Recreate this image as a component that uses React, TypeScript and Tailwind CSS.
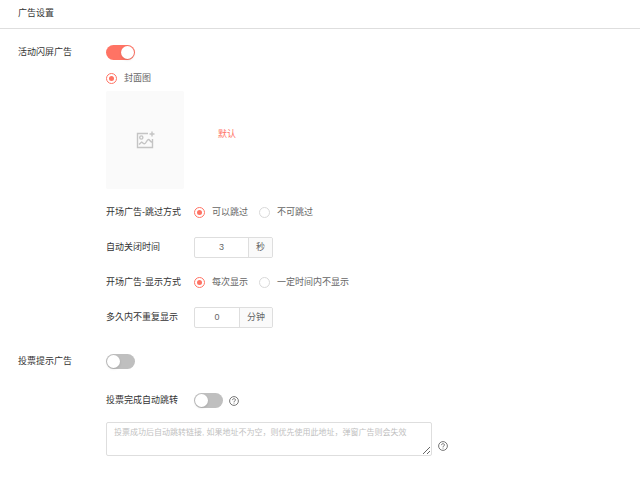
import { useState, type ReactNode } from "react";

function Switch({ id, initial = false }: { id: string; initial?: boolean }) {
  const [on, setOn] = useState(initial);
  return (
    <input
      id={id}
      type="checkbox"
      role="switch"
      checked={on}
      onChange={() => setOn(!on)}
      className="flex h-[15px] w-[29px] shrink-0 cursor-pointer appearance-none items-center rounded-full bg-[#bfbfbf] px-px before:size-[13px] before:rounded-full before:bg-white before:shadow-sm checked:justify-end checked:bg-[#ff7364]"
    />
  );
}

function Radio({ name, label, initial = false }: { name: string; label: string; initial?: boolean }) {
  return (
    <label className="flex cursor-pointer items-center gap-[7px] text-[#666]">
      <input
        type="radio"
        name={name}
        defaultChecked={initial}
        className="flex size-[11px] shrink-0 cursor-pointer appearance-none items-center justify-center rounded-full border border-[#d9d9d9] before:size-[5px] before:rounded-full checked:border-[#ff7364] checked:before:bg-[#ff7364]"
      />
      {label}
    </label>
  );
}

function NumberField({ id, value, unit }: { id: string; value: string; unit: string }) {
  return (
    <div className="flex h-[21px] w-[79px] overflow-hidden rounded-xs border border-[#dedede] text-[#666]">
      <input id={id} defaultValue={value} className="min-w-0 flex-1 text-center outline-none" />
      <span className="flex items-center border-l border-[#dedede] bg-[#fafafa] px-[7px]">{unit}</span>
    </div>
  );
}

function SubRow({ label, htmlFor, children }: { label: string; htmlFor?: string; children: ReactNode }) {
  return (
    <div className="flex h-[21px] items-center">
      {htmlFor ? (
        <label htmlFor={htmlFor} className="w-[88px] shrink-0">
          {label}
        </label>
      ) : (
        <span className="w-[88px] shrink-0">{label}</span>
      )}
      {children}
    </div>
  );
}

function Help() {
  return (
    <svg viewBox="0 0 20 20" className="size-[10px] shrink-0" fill="none" stroke="#666" strokeWidth="1.8" role="img" aria-label="帮助">
      <circle cx="10" cy="10" r="8.8" />
      <path d="M7 8.200C7 6.400 8.300 5.400 10 5.400s3 1 3 2.600c0 1.800-3 1.900-3 4" />
      <path d="M10 13.300v1.800" />
    </svg>
  );
}

function ImagePlus() {
  return (
    <svg viewBox="0 0 19 18" className="h-[18px] w-[19px]" fill="none" stroke="#c4c4c4" strokeWidth="1.4" aria-hidden="true">
      <path d="M12 2.500H1.500v14h15V8" />
      <circle cx="5.300" cy="6.500" r="1.600" />
      <path d="M3 13.500l2.700-2.400c1 .2 1.500 1.700 2.800 1.700 1.800 0 2-4.300 4-4.300 1.300 0 1.500 2.500 4 2.800" />
      <path d="M16 .5v5M13.500 3h5" />
    </svg>
  );
}

export default function App() {
  return (
    <main className="min-h-screen bg-white font-['Liberation_Sans','Noto_Sans_CJK_SC',sans-serif] text-[9px] leading-[15px] text-[#333]">
      <header className="flex h-[29px] items-center border-b border-[#dedede] px-[18px] pb-0.5">
        <h1>广告设置</h1>
      </header>

      <section className="flex px-[18px] pt-4">
        <label htmlFor="splash" className="h-[15px] w-[88px] shrink-0">
          活动闪屏广告
        </label>
        <div className="min-w-0 flex-1">
          <Switch id="splash" initial />
          <div className="mt-[11px]">
            <Radio name="kind" label="封面图" initial />
          </div>
          <div className="mt-[5px] flex items-center">
            <button
              type="button"
              aria-label="上传封面图"
              className="flex h-[98px] w-[78px] items-center justify-center rounded-xs bg-[#fafafa]"
            >
              <ImagePlus />
            </button>
            <button type="button" className="mb-3 ml-[34px] text-[#ff7364]">
              默认
            </button>
          </div>
          <div className="mt-[13px] flex flex-col gap-3.5">
            <SubRow label="开场广告-跳过方式">
              <div className="flex gap-[11px]">
                <Radio name="skip" label="可以跳过" initial />
                <Radio name="skip" label="不可跳过" />
              </div>
            </SubRow>
            <SubRow label="自动关闭时间" htmlFor="close">
              <NumberField id="close" value="3" unit="秒" />
            </SubRow>
            <SubRow label="开场广告-显示方式">
              <div className="flex gap-[11px]">
                <Radio name="show" label="每次显示" initial />
                <Radio name="show" label="一定时间内不显示" />
              </div>
            </SubRow>
            <SubRow label="多久内不重复显示" htmlFor="repeat">
              <NumberField id="repeat" value="0" unit="分钟" />
            </SubRow>
          </div>
        </div>
      </section>

      <section className="flex px-[18px] pt-[26px]">
        <label htmlFor="vote" className="h-[15px] w-[88px] shrink-0">
          投票提示广告
        </label>
        <div className="min-w-0 flex-1">
          <Switch id="vote" />
          <div className="mt-[21px]">
            <SubRow label="投票完成自动跳转" htmlFor="jump">
              <div className="flex items-center gap-1.5">
                <Switch id="jump" />
                <Help />
              </div>
            </SubRow>
          </div>
          <div className="mt-[11px] flex items-end gap-1.5">
            <textarea
              aria-label="跳转链接"
              placeholder="投票成功后自动跳转链接, 如果地址不为空，则优先使用此地址，弹窗广告则会失效"
              className="h-[34px] w-[326px] max-w-full rounded-xs border border-[#dedede] px-[7px] py-[3px] text-[8px] leading-[13px] outline-none placeholder:text-[#bfbfbf]"
            />
            <div className="pb-[5px]">
              <Help />
            </div>
          </div>
        </div>
      </section>
    </main>
  );
}
